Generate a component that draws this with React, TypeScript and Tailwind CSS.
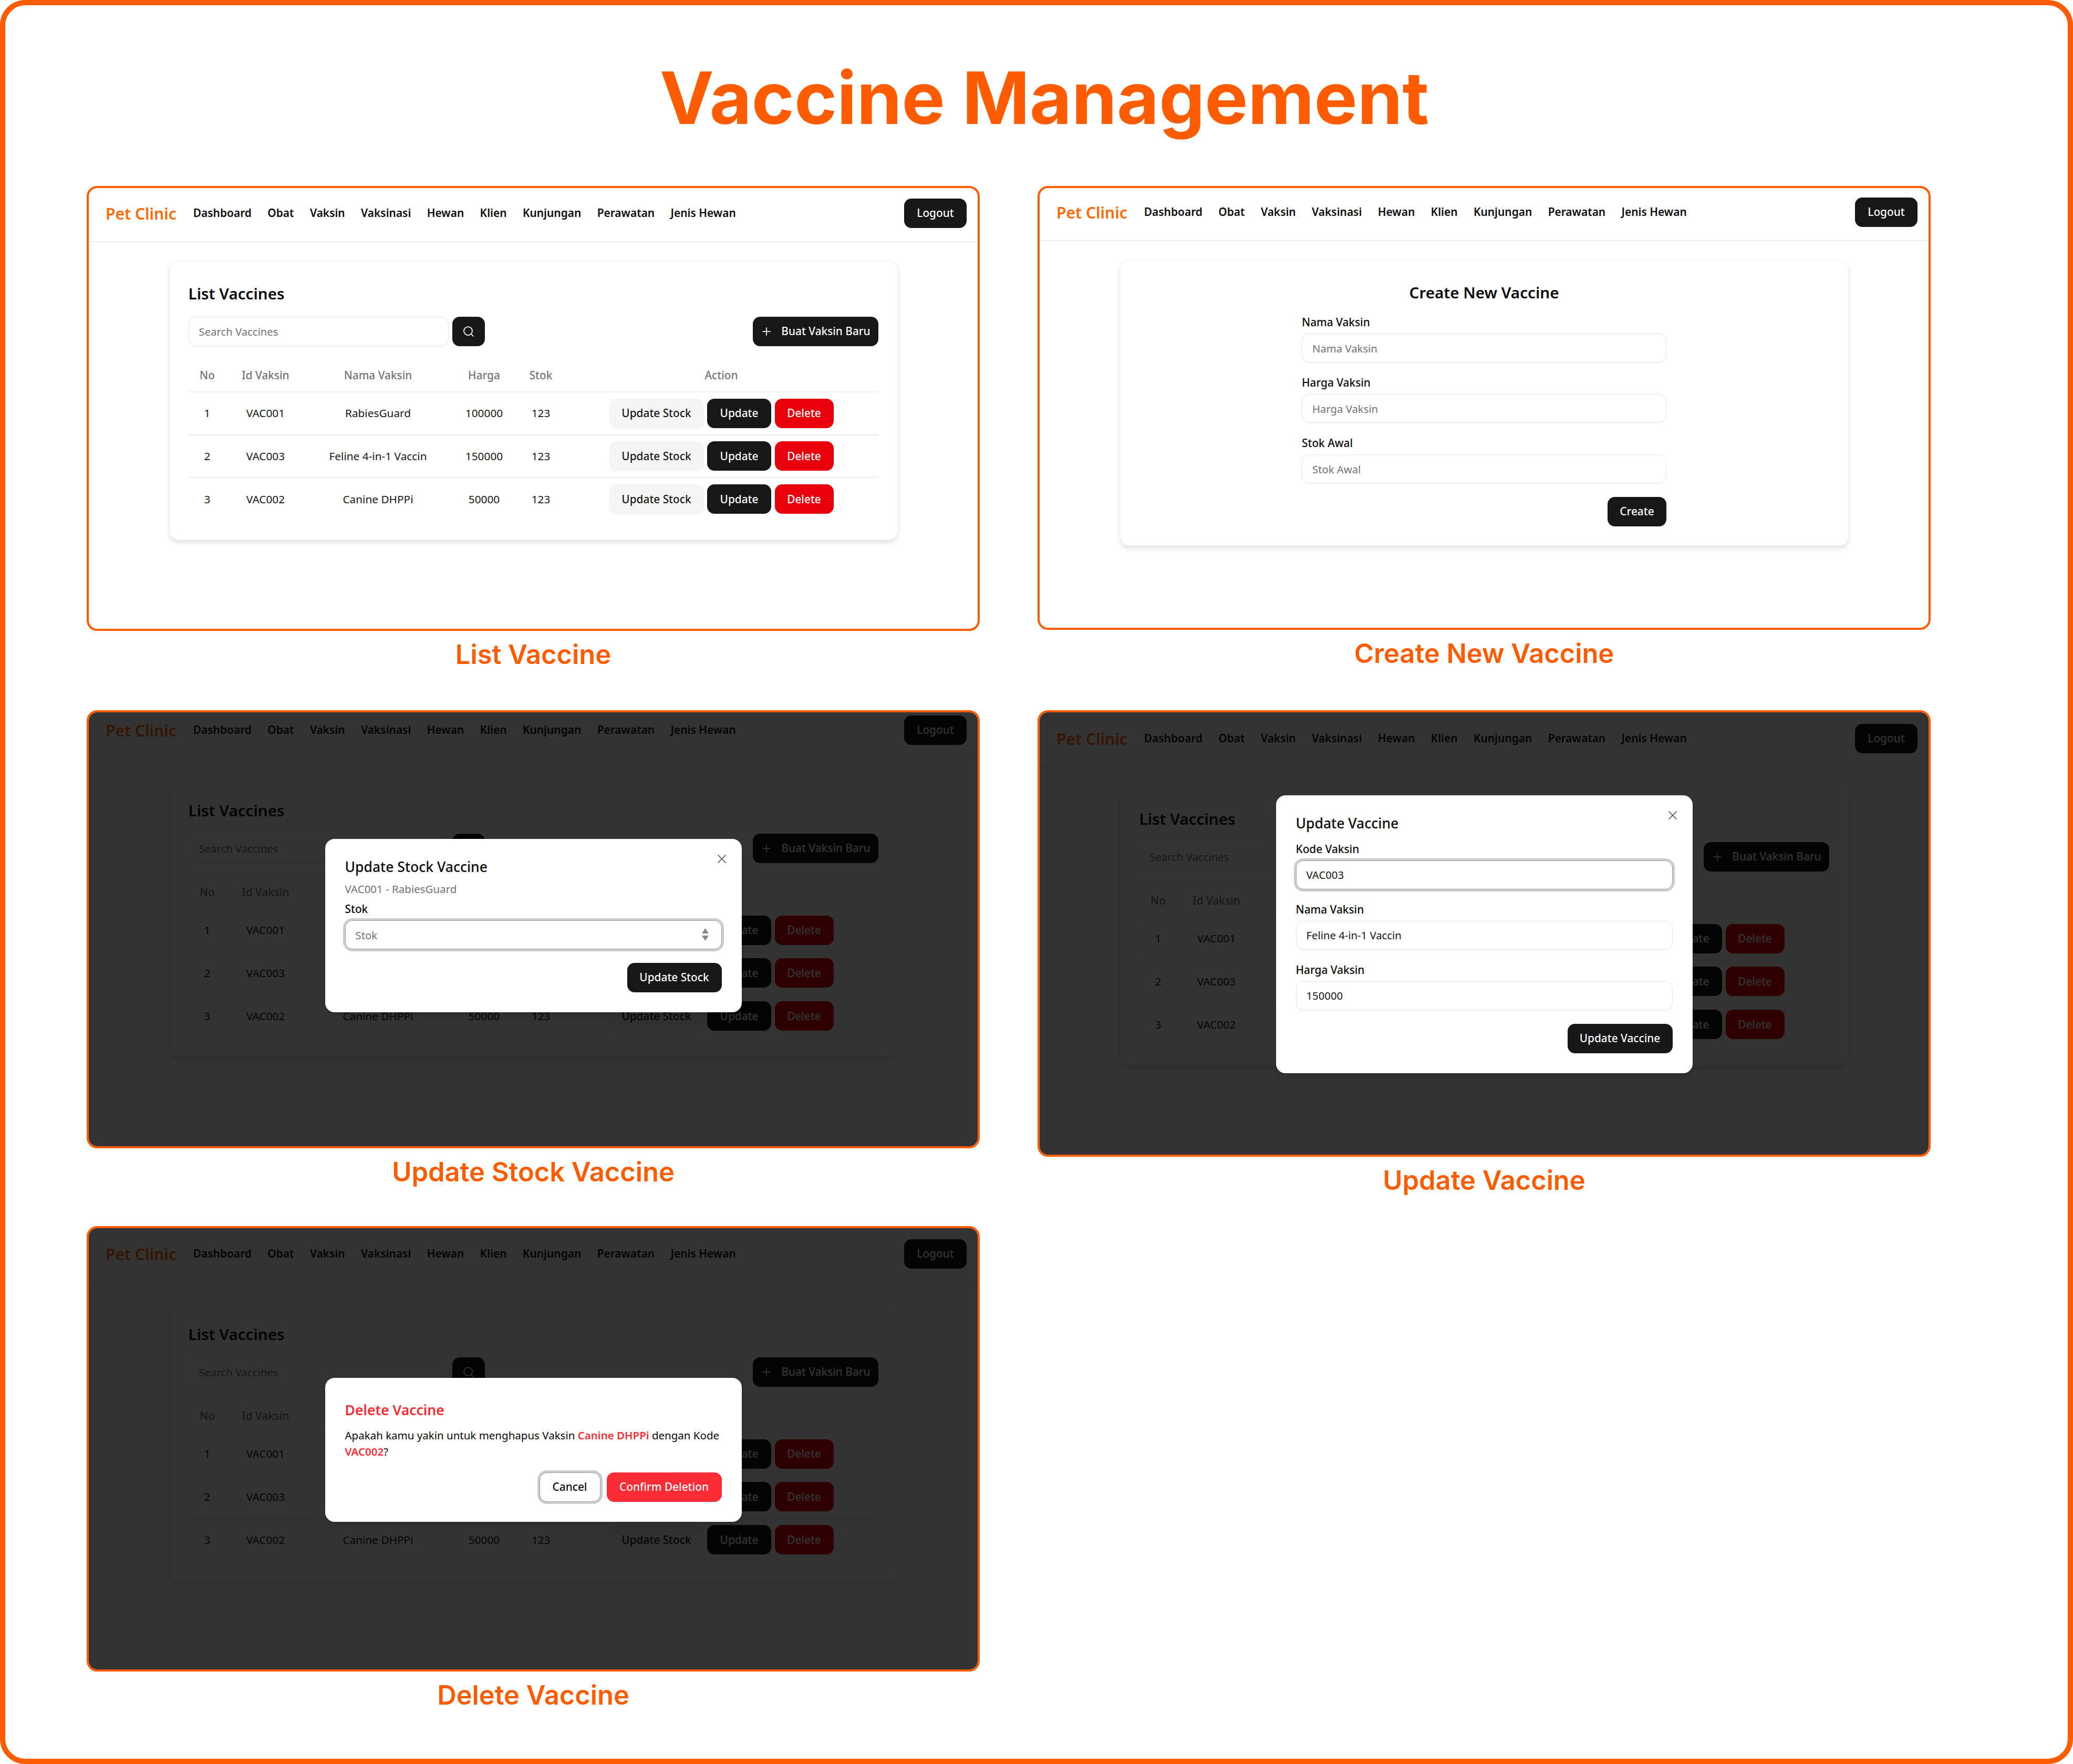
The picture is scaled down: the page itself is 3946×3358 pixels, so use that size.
import { Plus, Search, X } from "lucide-react";
import type { ReactNode } from "react";

const navLinks = ["Dashboard", "Obat", "Vaksin", "Vaksinasi", "Hewan", "Klien", "Kunjungan", "Perawatan", "Jenis Hewan"];

const vaccines = [
  { no: 1, id: "VAC001", name: "RabiesGuard", price: 100000, stock: 123 },
  { no: 2, id: "VAC003", name: "Feline 4-in-1 Vaccin", price: 150000, stock: 123 },
  { no: 3, id: "VAC002", name: "Canine DHPPi", price: 50000, stock: 123 },
];

function Btn({ className, children }: { className: string; children: ReactNode }) {
  return (
    <button className={`flex h-[56px] items-center justify-center rounded-[14px] text-[20.8px] font-medium shadow-xs ${className}`}>
      {children}
    </button>
  );
}

function Navbar() {
  return (
    <nav className="flex h-[103px] items-start justify-between border-b-2 border-[#f0f0f0] pl-[32px] pr-[21px] pt-[20px]">
      <div className="flex h-[56px] items-center">
        <span className="mr-[32px] text-[30px] font-semibold text-orange-500">Pet Clinic</span>
        <div className="flex gap-[30.4px] text-[20.9px] font-semibold text-neutral-950">
          {navLinks.map((link) => (
            <a key={link}>{link}</a>
          ))}
        </div>
      </div>
      <Btn className="w-[119px] bg-[#171717] text-white">Logout</Btn>
    </nav>
  );
}

function VaccineTable() {
  return (
    <table className="mt-[25px] w-full table-fixed text-[20.8px] text-neutral-900">
      <colgroup>
        <col className="w-[72px]" />
        <col className="w-[150px]" />
        <col className="w-[278px]" />
        <col className="w-[126px]" />
        <col className="w-[90px]" />
        <col />
      </colgroup>
      <thead>
        <tr className="h-[62px] border-b-2 border-[#f0f0f0] text-neutral-500">
          <th className="font-medium">No</th>
          <th className="font-medium">Id Vaksin</th>
          <th className="font-medium">Nama Vaksin</th>
          <th className="font-medium">Harga</th>
          <th className="font-medium">Stok</th>
          <th className="font-medium">Action</th>
        </tr>
      </thead>
      <tbody>
        {vaccines.map((v) => (
          <tr key={v.id} className="h-[81.5px] border-b-2 border-[#eeeeee] text-center last:border-b-0">
            <td>{v.no}</td>
            <td>{v.id}</td>
            <td>{v.name}</td>
            <td>{v.price}</td>
            <td>{v.stock}</td>
            <td>
              <div className="flex justify-center gap-[6.5px]">
                <Btn className="w-[180px] bg-neutral-100 text-neutral-900">Update Stock</Btn>
                <Btn className="w-[122px] bg-[#171717] text-white">Update</Btn>
                <Btn className="w-[112px] bg-red-600 text-white">Delete</Btn>
              </div>
            </td>
          </tr>
        ))}
      </tbody>
    </table>
  );
}

function ListCard() {
  return (
    <div className="mx-auto mt-[35px] h-[532px] w-[1387px] rounded-[18px] border border-neutral-100 bg-white px-[36px] pt-[42px] shadow-[0_5px_10px_rgba(0,0,0,0.12)]">
      <h2 className="h-[40px] text-[29.6px] font-semibold leading-[40px] text-neutral-950">List Vaccines</h2>
      <div className="mt-[24px] flex">
        <input
          readOnly
          placeholder="Search Vaccines"
          className="h-[56px] w-[495px] rounded-[14px] border border-neutral-200 px-[19px] text-[20.3px] shadow-xs placeholder:text-neutral-500"
        />
        <Btn className="ml-[7px] w-[62px] bg-[#171717] text-white">
          <Search size={24} strokeWidth={1.75} />
        </Btn>
        <Btn className="ml-auto w-[239px] gap-[16px] bg-[#171717] text-white">
          <Plus size={24} strokeWidth={1.75} />
          Buat Vaksin Baru
        </Btn>
      </div>
      <VaccineTable />
    </div>
  );
}

function Field({ label, placeholder, value, focused, spinner, className }: { label: string; placeholder?: string; value?: string; focused?: boolean; spinner?: boolean; className?: string }) {
  return (
    <div className={className}>
      <label className="block h-[28px] text-[20.8px] font-medium leading-[28px] text-neutral-950">{label}</label>
      <div className="relative mt-[8px]">
        <input
          readOnly
          placeholder={placeholder}
          value={value}
          className={`h-[55px] w-full rounded-[14px] border px-[19px] text-[20.3px] text-neutral-900 shadow-xs placeholder:text-neutral-500 ${focused ? "border-neutral-400 ring-[4px] ring-[#cccccc]" : "border-neutral-200"}`}
        />
        {spinner && (
          <svg className="absolute right-[25px] top-[15px] h-[24px] w-[13px] text-[#888888]" viewBox="0 0 13 24" fill="currentColor">
            <path d="M6.5 0 13 10H0ZM6.5 24 0 14H13Z" />
          </svg>
        )}
      </div>
    </div>
  );
}

function CreateCard() {
  return (
    <div className="mx-auto mt-[36px] h-[544px] w-[1387px] rounded-[18px] border border-neutral-100 bg-white pt-[41px] shadow-[0_5px_10px_rgba(0,0,0,0.12)]">
      <h2 className="h-[40px] text-center text-[29.6px] font-semibold leading-[40px] text-neutral-950">Create New Vaccine</h2>
      <form className="mx-auto mt-[22px] w-[694px]">
        <Field label="Nama Vaksin" placeholder="Nama Vaksin" />
        <Field className="mt-[24px]" label="Harga Vaksin" placeholder="Harga Vaksin" />
        <Field className="mt-[24px]" label="Stok Awal" placeholder="Stok Awal" />
        <div className="mt-[26px] flex justify-end">
          <Btn className="w-[112px] bg-[#171717] text-white">Create</Btn>
        </div>
      </form>
    </div>
  );
}

function Modal({ className, closable, children }: { className: string; closable?: boolean; children: ReactNode }) {
  return (
    <div className={`relative w-[793px] rounded-[18px] bg-white px-[38px] shadow-lg ${className}`}>
      {closable && <X className="absolute right-[24px] top-[24px] text-neutral-600" size={28} strokeWidth={1.5} />}
      {children}
    </div>
  );
}

function Frame({ className, contentClass, overlayClass, card, children }: { className: string; contentClass?: string; overlayClass?: string; card?: ReactNode; children?: ReactNode }) {
  return (
    <div className={`relative overflow-hidden rounded-[20px] border-4 border-[#ff5c00] bg-white font-['Noto_Sans',sans-serif] ${className}`}>
      <div className={contentClass}>
        <Navbar />
        {card ?? <ListCard />}
      </div>
      {children && <div className={`absolute inset-0 flex items-center justify-center bg-black/80 ${overlayClass ?? ""}`}>{children}</div>}
    </div>
  );
}

function Caption({ children, className }: { children: ReactNode; className?: string }) {
  return (
    <h3 className={`mt-[9px] flex h-[72px] items-center justify-center font-['Inter',sans-serif] text-[50.6px] font-semibold text-[#ff5c00] ${className ?? ""}`}>
      {children}
    </h3>
  );
}

export default function App() {
  return (
    <div className="h-[3358px] w-[3946px] rounded-[48px] border-[10px] border-[#ff5c00] bg-white pl-[155px]">
      <h1 className="w-[3646px] pt-[116px] text-center font-['Inter',sans-serif] text-[138px] font-bold leading-[120px] text-[#ff5c00]">
        Vaccine Management
      </h1>
      <div className="mt-[108px] flex gap-[110px]">
        <div className="w-[1700px]">
          <Frame className="h-[847px]" />
          <Caption className="mb-[70px]">List Vaccine</Caption>

          <Frame className="h-[834px]" contentClass="-mt-[14px]" overlayClass="pb-[14px]">
            <Modal className="h-[330px] pt-[35px]" closable>
              <h2 className="h-[36px] text-[26.5px] font-medium leading-[36px] text-neutral-950">Update Stock Vaccine</h2>
              <p className="mt-[10px] h-[28px] text-[20.5px] leading-[28px] text-neutral-500">VAC001 - RabiesGuard</p>
              <Field className="mt-[10px]" label="Stok" placeholder="Stok" focused spinner />
              <div className="mt-[26px] flex justify-end">
                <Btn className="w-[180px] bg-[#171717] text-white">Update Stock</Btn>
              </div>
            </Modal>
          </Frame>
          <Caption className="mb-[67px]">Update Stock Vaccine</Caption>

          <Frame className="h-[848px]" contentClass="mt-[1px]" overlayClass="pt-[3px]">
            <Modal className="h-[274px] pt-[43px]">
              <h2 className="h-[36px] text-[26.5px] font-semibold leading-[36px] text-red-500">Delete Vaccine</h2>
              <p className="mt-[15px] text-[20.5px] leading-[31px] text-neutral-950">
                Apakah kamu yakin untuk menghapus Vaksin <b className="font-semibold text-red-500">Canine DHPPi</b> dengan Kode{" "}
                <b className="font-semibold text-red-500">VAC002</b>?
              </p>
              <div className="mt-[24px] flex justify-end gap-[12px]">
                <Btn className="w-[116px] border border-neutral-400 bg-white text-neutral-950 ring-[4px] ring-[#cccccc]">Cancel</Btn>
                <Btn className="w-[219px] bg-red-500 text-white">Confirm Deletion</Btn>
              </div>
            </Modal>
          </Frame>
          <Caption>Delete Vaccine</Caption>
        </div>

        <div className="w-[1700px]">
          <Frame className="h-[845px]" contentClass="-mt-[2px]" card={<CreateCard />} />
          <Caption className="mb-[72px]">Create New Vaccine</Caption>

          <Frame className="h-[850px]" contentClass="mt-[2px]" overlayClass="pt-[2px]">
            <Modal className="h-[529px] pt-[35px]" closable>
              <h2 className="h-[36px] text-[26.5px] font-medium leading-[36px] text-neutral-950">Update Vaccine</h2>
              <Field className="mt-[17px]" label="Kode Vaksin" value="VAC003" focused />
              <Field className="mt-[24px]" label="Nama Vaksin" value="Feline 4-in-1 Vaccin" />
              <Field className="mt-[24px]" label="Harga Vaksin" value="150000" />
              <div className="mt-[26px] flex justify-end">
                <Btn className="w-[200px] bg-[#171717] text-white">Update Vaccine</Btn>
              </div>
            </Modal>
          </Frame>
          <Caption>Update Vaccine</Caption>
        </div>
      </div>
    </div>
  );
}
